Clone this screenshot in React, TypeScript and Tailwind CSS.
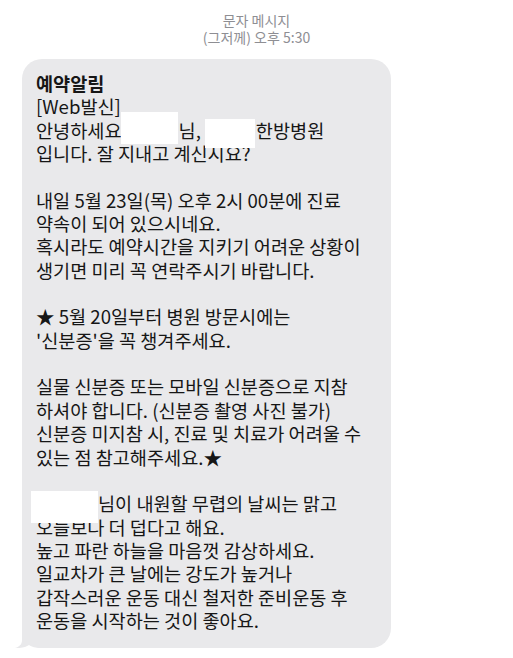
// App.tsx
// iOS-style SMS bubble: appointment reminder from a clinic

const font = { fontFamily: '"Noto Sans CJK KR", "Noto Sans", sans-serif' };

// white box that hides a name; takes inline space w and paints an overlay box
function Redact({ w, left, top, bw, bh }: { w: number; left: number; top: number; bw: number; bh: number }) {
    return (
        <span className="relative inline-block h-0 align-top" style={{ width: w }}>
            <span className="absolute bg-white" style={{ left, top, width: bw, height: bh }} />
        </span>
    );
}

export default function App() {
    return (
        <main className="min-h-screen w-full bg-white" style={font}>
            {/* Header: conversation type + timestamp */}
            <div className="pt-[12px] text-center text-[14px] leading-[17px] text-[#8e8e93]">
                <div>문자 메시지</div>
                <div>(그저께) 오후 5:30</div>
            </div>

            {/* Incoming bubble */}
            <div className="relative ml-[22px] mt-[13px] w-[369px] rounded-[20px] bg-[#e9e9eb] pl-[14px] pr-[10px] pt-[12px] pb-[17px] text-[18.6px] leading-[23.35px] text-[#161616]">
                <div className="relative z-10 whitespace-nowrap">
                    <div className="font-bold">예약알림</div>
                    <div>[Web발신]</div>
                    <div className="relative">
                        안녕하세요
                        <Redact w={57} left={-1} top={-6} bw={57} bh={32} />
                        님,
                        <Redact w={55} left={4} top={1} bw={50} bh={29} />
                        한방병원
                    </div>
                    <div>입니다. 잘 지내고 계신시요?</div>
                    <div>&nbsp;</div>
                    <div>내일 5월 23일(목) 오후 2시 00분에 진료</div>
                    <div>약속이 되어 있으시네요.</div>
                    <div>혹시라도 예약시간을 지키기 어려운 상황이</div>
                    <div>생기면 미리 꼭 연락주시기 바랍니다.</div>
                    <div>&nbsp;</div>
                    <div>★ 5월 20일부터 병원 방문시에는</div>
                    <div>'신분증'을 꼭 챙겨주세요.</div>
                    <div>&nbsp;</div>
                    <div>실물 신분증 또는 모바일 신분증으로 지참</div>
                    <div>하셔야 합니다. (신분증 촬영 사진 불가)</div>
                    <div>신분증 미지참 시, 진료 및 치료가 어려울 수</div>
                    <div>있는 점 참고해주세요.★</div>
                    <div>&nbsp;</div>
                    <div>
                        <Redact w={62} left={-5} top={0} bw={67} bh={32} />
                        님이 내원할 무렵의 날씨는 맑고
                    </div>
                    <div>오늘보다 더 덥다고 해요.</div>
                    <div>높고 파란 하늘을 마음껏 감상하세요.</div>
                    <div>일교차가 큰 날에는 강도가 높거나</div>
                    <div>갑작스러운 운동 대신 철저한 준비운동 후</div>
                    <div>운동을 시작하는 것이 좋아요.</div>
                </div>

                {/* tail */}
                <svg className="absolute bottom-0 left-[-7px]" width="27" height="22" viewBox="0 0 27 22">
                    <path d="M7 0 L7 14 C7 18 5 20.5 0 22 C6 22.5 11 21 14 19 C17 21 20 22 27 22 L27 0 Z" fill="#e9e9eb" />
                </svg>
            </div>
        </main>
    );
}
